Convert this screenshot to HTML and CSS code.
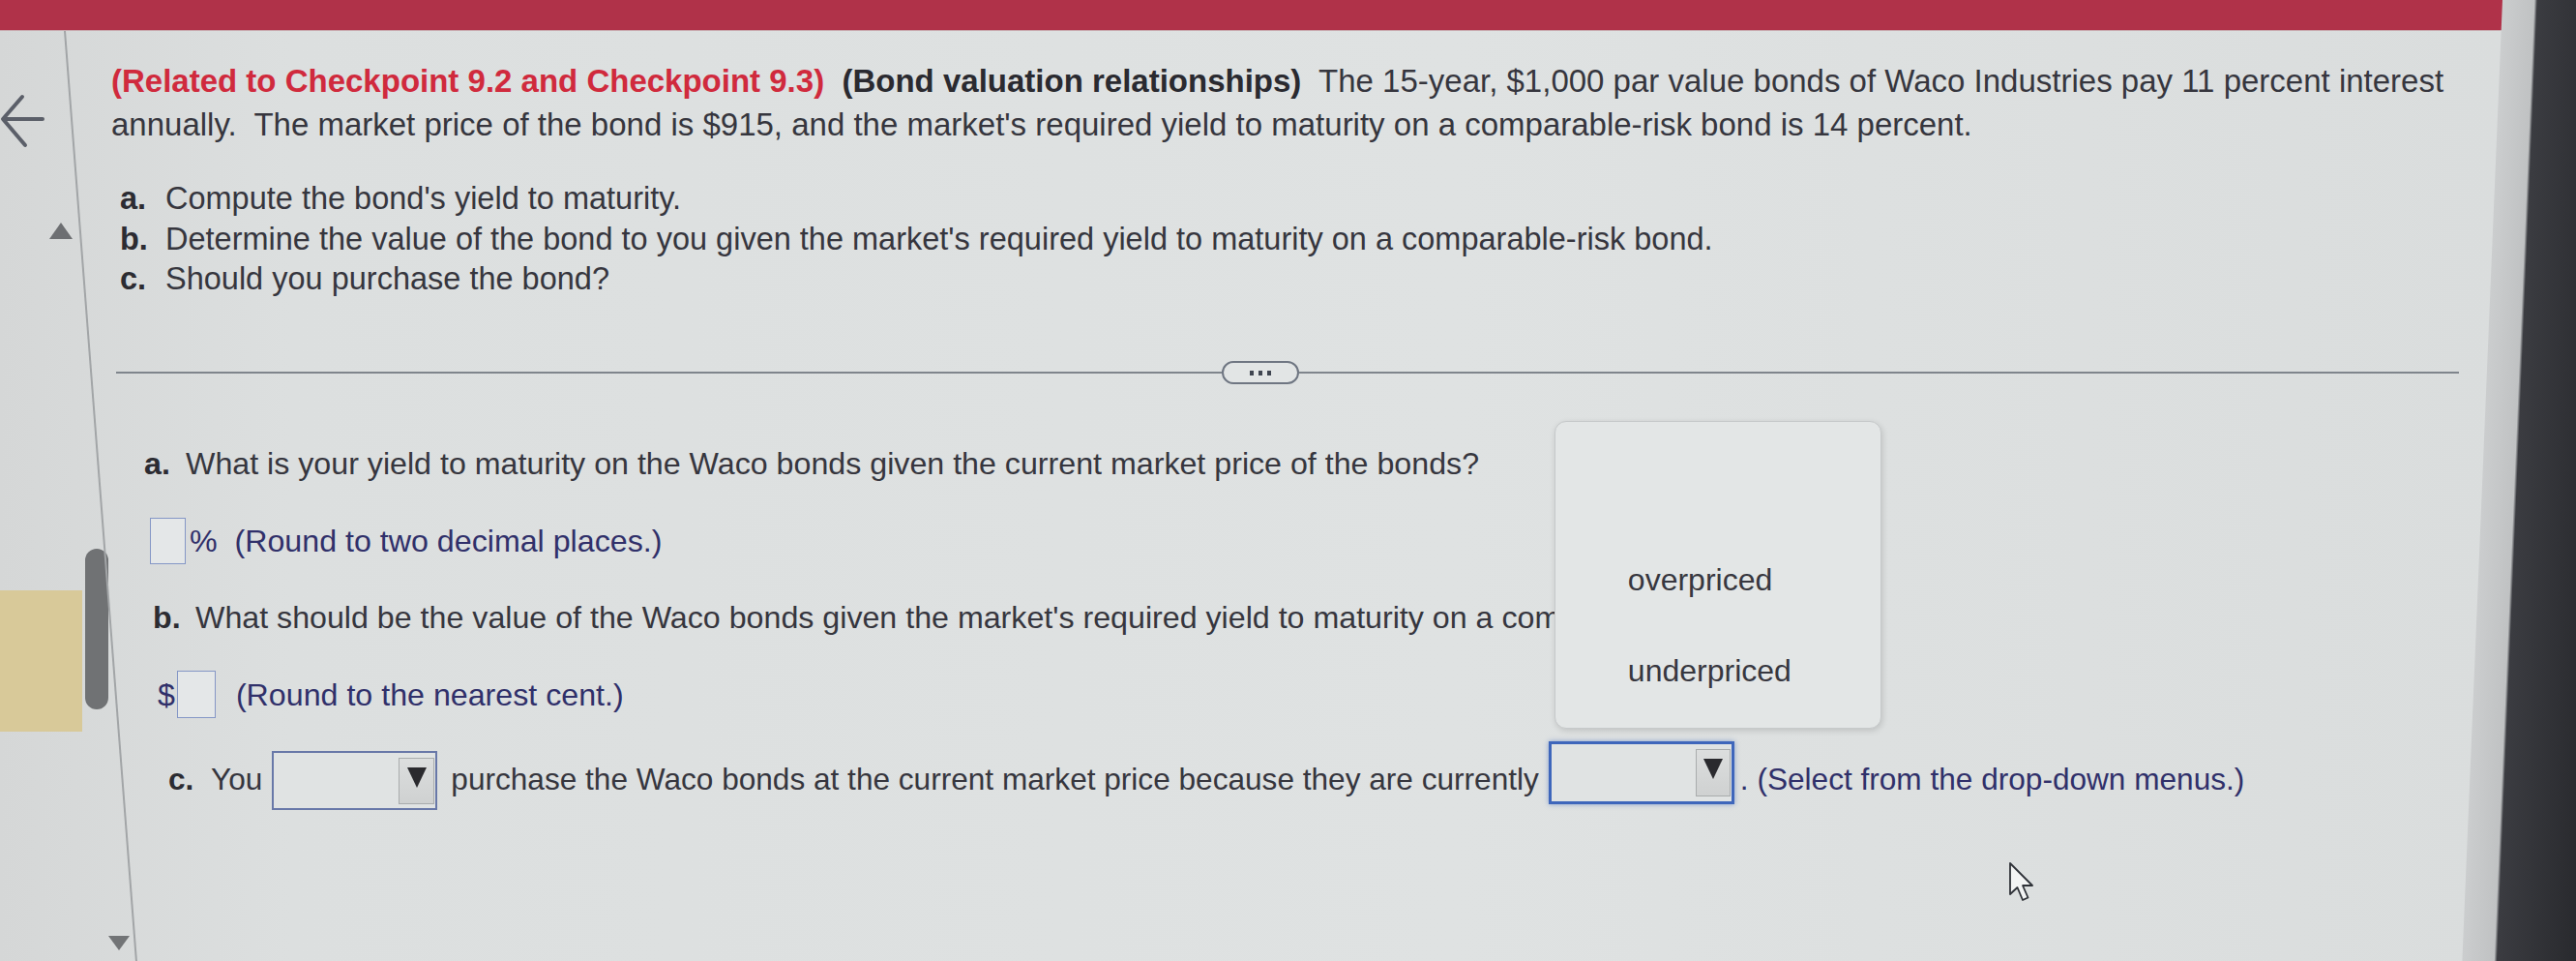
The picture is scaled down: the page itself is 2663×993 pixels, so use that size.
FILE: index.html
```html
<!DOCTYPE html>
<html lang="en">
<head>
<meta charset="utf-8">
<title>Bond valuation relationships</title>
<link rel="stylesheet" href="styles.css">
</head>
<body>
<div class="screen">
  <div class="topbar"></div>
  <div class="main">
    <aside class="sidebar">
      <svg class="back" width="46" height="56" viewBox="0 0 46 56">
        <path d="M44 26 H4 M23 3 L3 26 L26 53" fill="none" stroke="#5b5f69" stroke-width="4" stroke-linecap="round" stroke-linejoin="round"/>
      </svg>
      <span class="tri-up"></span>
      <div class="scroll-row"><span class="tan"></span><span class="thumb"></span></div>
      <span class="tri-down"></span>
    </aside>
    <div class="content">
      <p class="intro"><span class="red">(Related to Checkpoint 9.2 and Checkpoint 9.3)</span><b class="title">&nbsp; (Bond valuation relationships)</b><span class="plain">&nbsp; The 15-year, $1,000 par value bonds of Waco Industries pay 11 percent interest </span><span class="plain">annually.&nbsp; The market price of the bond is $915, and the market's required yield to maturity on a comparable-risk bond is 14 percent.</span></p>
      <ol class="tasks">
        <li><b>a.</b><span>Compute the bond's yield to maturity.</span></li>
        <li><b>b.</b><span>Determine the value of the bond to you given the market's required yield to maturity on a comparable-risk bond.</span></li>
        <li><b>c.</b><span>Should you purchase the bond?</span></li>
      </ol>
      <div class="divider"><span class="rule"></span><span class="pill"><i></i><i></i><i></i></span><span class="rule"></span></div>
      <div class="q qa"><b>a.</b><span>What is your yield to maturity on the Waco bonds given the current market price of the bonds?</span></div>
      <div class="ans ans-a"><span class="box box-a"></span><span class="instr">%&nbsp; (Round to two decimal places.)</span></div>
      <div class="q qb"><b>b.</b><span>What should be the value of the Waco bonds given the market's required yield to maturity on a comparable-risk bond?</span></div>
      <div class="ans ans-b"><span class="instr dollar">$</span><span class="box box-b"></span><span class="instr round">(Round to the nearest cent.)</span></div>
      <div class="qc">
        <b class="t lbl">c.</b><span class="t you">You</span>
        <span class="dd dd1"><span class="btn"><span class="arr"></span></span></span>
        <span class="t mid">purchase the Waco bonds at the current market price because they are currently</span>
        <span class="dd-wrap">
          <span class="dd dd2"><span class="btn"><span class="arr"></span></span></span>
          <span class="menu">
            <span class="opt"></span>
            <span class="opt">overpriced</span>
            <span class="opt">underpriced</span>
          </span>
        </span>
        <span class="t instr tail">. (Select from the drop-down menus.)</span>
      </div>
      <svg class="cursor" width="30" height="46" viewBox="0 0 30 46">
        <path d="M3 3 L3 35 L10.5 28 L16 41 L21.5 38.5 L16 26 L26 26 Z" fill="#f3f4f4" stroke="#2f3238" stroke-width="1.8" stroke-linejoin="round"/>
      </svg>
    </div>
  </div>
</div>
<div class="bezel"></div>
</body>
</html>
```

FILE: styles.css
```css
html, body {
  margin: 0;
  padding: 0;
}
body {
  display: flex;
  width: 2663px;
  height: 993px;
  overflow: hidden;
  background: #dcdfdf;
  font-family: "Liberation Sans", Arial, sans-serif;
  color: #36363e;
}
.screen {
  width: 2587px;
  flex-shrink: 0;
  display: flex;
  flex-direction: column;
  background: linear-gradient(to right, #d5d7d7 0, #dcdfdf 300px, #dfe2e2 1500px, #dadddd 2587px);
}
.bezel {
  flex: none;
  width: 130px;
  transform: skewX(-2.4deg);
  transform-origin: top left;
  background: linear-gradient(to right, #cbcdce 0, #c0c2c3 33px, #3b3c41 36px, #26272b 100%);
}
.topbar {
  height: 32px;
  background: #b03249;
  border-bottom: 1px solid #c9a9ae;
  box-sizing: border-box;
}
.main {
  display: flex;
  height: 961px;
}

/* sidebar */
.sidebar {
  position: relative;
  width: 115px;
  flex-shrink: 0;
  display: flex;
  flex-direction: column;
  align-items: flex-start;
}
.sidebar::after {
  content: "";
  position: absolute;
  left: 66px;
  top: 0;
  width: 2px;
  height: 961px;
  background: #a2a5a7;
  transform: skewX(4.4deg);
  transform-origin: top left;
}
.back {
  display: block;
  margin-top: 65px;
}
.tri-up {
  margin-top: 77px;
  margin-left: 51px;
  width: 0;
  height: 0;
  border-left: 12px solid transparent;
  border-right: 12px solid transparent;
  border-bottom: 17px solid #6d6f72;
}
.scroll-row {
  margin-top: 320px;
  display: flex;
  align-items: flex-start;
}
.tan {
  width: 85px;
  height: 146px;
  margin-top: 43px;
  background: #d8c999;
}
.thumb {
  width: 24px;
  height: 166px;
  margin-left: 3px;
  border-radius: 12px;
  background: #707274;
}
.tri-down {
  margin-top: 211px;
  margin-left: 112px;
  width: 0;
  height: 0;
  border-left: 11px solid transparent;
  border-right: 11px solid transparent;
  border-top: 15px solid #727476;
}

/* content */
.content {
  position: relative;
  flex: 1;
  display: flex;
  flex-direction: column;
  align-items: flex-start;
}
.intro {
  margin: 29px 0 0 0;
  width: 2460px;
  font-size: 33px;
  line-height: 45px;
}
.red {
  color: #d02a3d;
  font-weight: bold;
}
.title {
  color: #2a2a30;
}
.tasks {
  list-style: none;
  margin: 34px 0 0 0;
  padding: 0 0 0 9px;
  font-size: 32.5px;
  line-height: 41.5px;
}
.tasks li {
  display: flex;
}
.tasks li b {
  width: 47px;
  flex-shrink: 0;
  color: #2c2c32;
}
.divider {
  margin-top: 63.5px;
  padding-left: 5px;
  height: 24px;
  display: grid;
  grid-template-columns: 1143px 80px 1199px;
  align-items: center;
}
.rule {
  height: 2px;
  background: #7f858c;
}
.pill {
  box-sizing: border-box;
  height: 24px;
  border: 2px solid #6f7682;
  border-radius: 12px;
  background: #e2e5e5;
  display: flex;
  justify-content: center;
  align-items: center;
  gap: 5px;
}
.pill i {
  width: 4px;
  height: 5px;
  background: #3f4550;
}
.q {
  display: flex;
  font-size: 32.2px;
  line-height: 40px;
  white-space: nowrap;
}
.q b {
  color: #2c2c32;
}
.qa {
  margin-top: 62px;
  padding-left: 34px;
}
.qa b { width: 43px; }
.qb {
  margin-top: 35px;
  padding-left: 43px;
}
.qb b { width: 44px; }
.ans {
  display: flex;
  align-items: center;
  font-size: 32.2px;
  line-height: 40px;
}
.instr {
  color: #30306a;
}
.box {
  box-sizing: border-box;
  border: 1.5px solid #8597c6;
  background: #e4e7e8;
}
.ans-a {
  margin-top: 36px;
  padding-left: 40px;
  height: 48px;
}
.box-a {
  width: 37px;
  height: 48px;
  margin-right: 4px;
}
.ans-b {
  margin-top: 35px;
  padding-left: 48px;
  height: 49px;
}
.dollar {
  margin-right: 2px;
}
.box-b {
  width: 40px;
  height: 49px;
  margin-right: 21px;
}
.qc {
  margin-top: 24px;
  padding-left: 59px;
  display: flex;
  align-items: flex-start;
  font-size: 31.6px;
  line-height: 40px;
  white-space: nowrap;
}
.qc .t {
  margin-top: 19px;
}
.lbl {
  width: 44px;
  color: #2c2c32;
}
.you {
  margin-right: 10px;
}
.dd {
  box-sizing: border-box;
  display: flex;
  justify-content: flex-end;
  align-items: center;
  background: #e0e3e3;
}
.dd1 {
  margin-top: 10px;
  width: 171px;
  height: 61px;
  border: 2px solid #6878a8;
  padding-right: 1px;
}
.mid {
  margin-left: 14px;
  margin-right: 10px;
}
.dd-wrap {
  position: relative;
  display: block;
}
.dd2 {
  width: 192px;
  height: 65px;
  border: 3px solid #3e66bb;
  box-shadow: 0 0 5px rgba(62, 102, 187, 0.55);
  padding-right: 1px;
}
.btn {
  box-sizing: border-box;
  width: 37px;
  height: 48px;
  border: 1px solid #a9acad;
  background: linear-gradient(#dcdede, #cfd1d1);
  display: flex;
  justify-content: center;
  padding-top: 9px;
}
.dd2 .btn {
  width: 36px;
  height: 49px;
}
.arr {
  width: 0;
  height: 0;
  border-left: 10px solid transparent;
  border-right: 10px solid transparent;
  border-top: 21px solid #2a2a2e;
}
.tail {
  margin-left: 6px;
}
.menu {
  position: absolute;
  z-index: 5;
  left: 6px;
  top: -331px;
  box-sizing: border-box;
  width: 338px;
  height: 318px;
  padding-top: 22px;
  border: 1px solid #c6c9ca;
  border-radius: 12px;
  background: #e3e6e6;
  box-shadow: 1px 2px 6px rgba(0, 0, 0, 0.14);
  display: flex;
  flex-direction: column;
  font-size: 32px;
  color: #37373f;
}
.opt {
  height: 94px;
  line-height: 94px;
  padding-left: 75px;
}
.cursor {
  position: absolute;
  left: 1960px;
  top: 857px;
}
```
